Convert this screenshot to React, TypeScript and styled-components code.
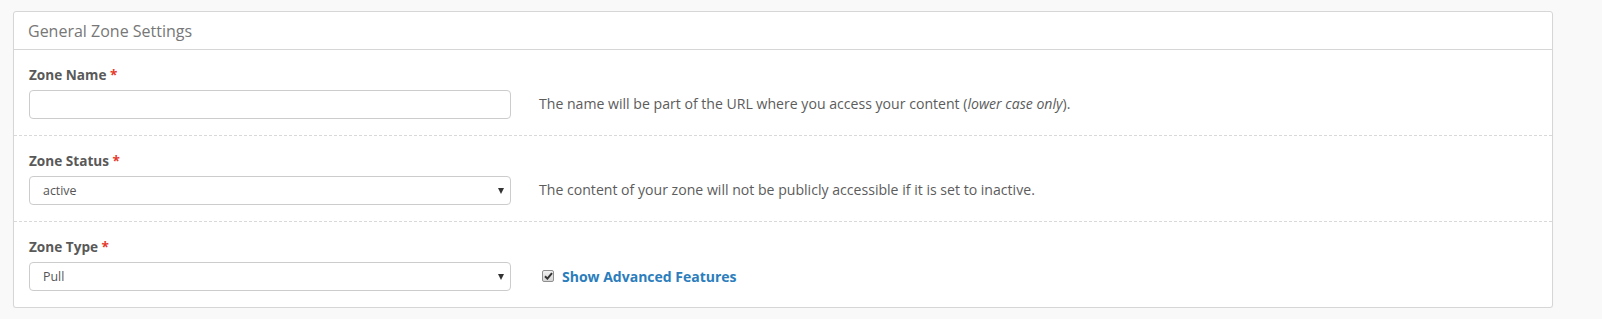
import React from 'react';
import styled, { createGlobalStyle } from 'styled-components';

const GlobalStyle = createGlobalStyle`
  html, body {
    margin: 0;
    padding: 0;
    background: #f9f9f9;
    font-family: 'Open Sans', 'Liberation Sans', Arial, sans-serif;
    color: #555;
  }
  * { box-sizing: border-box; }
`;

interface FieldRowProps {
  label: string;
  last?: boolean;
  control: React.ReactNode;
  aside: React.ReactNode;
}

const FieldRow: React.FC<FieldRowProps> = ({ label, last, control, aside }) => (
  <Row $last={last}>
    <LeftCol>
      <Label>
        {label} <Required>*</Required>
      </Label>
      {control}
    </LeftCol>
    <HelpCol>{aside}</HelpCol>
  </Row>
);

const App: React.FC = () => {
  return (
    <>
      <GlobalStyle />
      <Page>
        <Panel>
          <PanelHeader>General Zone Settings</PanelHeader>
          <FieldRow
            label="Zone Name"
            control={<TextInput type="text" defaultValue="" />}
            aside={
              <HelpText>
                The name will be part of the URL where you access your content (
                <em>lower case only</em>).
              </HelpText>
            }
          />
          <FieldRow
            label="Zone Status"
            control={
              <SelectWrap>
                <Select defaultValue="active">
                  <option value="active">active</option>
                  <option value="inactive">inactive</option>
                </Select>
              </SelectWrap>
            }
            aside={
              <HelpText>
                The content of your zone will not be publicly accessible if it is set to inactive.
              </HelpText>
            }
          />
          <FieldRow
            last
            label="Zone Type"
            control={
              <SelectWrap>
                <Select defaultValue="pull">
                  <option value="pull">Pull</option>
                  <option value="push">Push</option>
                </Select>
              </SelectWrap>
            }
            aside={
              <CheckLabel>
                <CheckBox>
                  <svg width="9" height="8" viewBox="0 0 9 8">
                    <path d="M1 4.2 L3.4 6.6 L8 1.2" fill="none" stroke="#333" strokeWidth="2" />
                  </svg>
                </CheckBox>
                Show Advanced Features
              </CheckLabel>
            }
          />
        </Panel>
      </Page>
    </>
  );
};

export default App;

const Page = styled.div`
  padding: 11px 0 0 13px;
`;

const Panel = styled.div`
  width: 1540px;
  background: #fff;
  border: 1px solid #d6d6d6;
  border-radius: 3px;
  box-shadow: 0 1px 1px rgba(0, 0, 0, 0.04);
`;

const PanelHeader = styled.div`
  height: 38px;
  padding: 0 14px;
  display: flex;
  align-items: center;
  font-size: 16px;
  color: #777;
  border-bottom: 1px solid #d6d6d6;
`;

const Row = styled.div<{ $last?: boolean }>`
  display: flex;
  align-items: flex-end;
  padding: 16px 15px 16px;
  border-bottom: ${(p) => (p.$last ? 'none' : '1px dashed #d9d9d9')};
`;

const LeftCol = styled.div`
  width: 482px;
  display: flex;
  flex-direction: column;
  gap: 6px;
`;

const Label = styled.div`
  font-size: 13.6px;
  line-height: 18px;
  font-weight: 700;
  color: #595959;
`;

const Required = styled.span`
  color: #e53b2c;
`;

const HelpCol = styled.div`
  height: 29px;
  display: flex;
  align-items: center;
  margin-left: 28px;
  padding-bottom: 3px;
`;

const HelpText = styled.div`
  font-size: 14.1px;
  color: #5c5c5c;
  em {
    font-style: italic;
  }
`;

const TextInput = styled.input`
  width: 100%;
  height: 29px;
  border: 1px solid #ccc;
  border-radius: 4px;
  background: #fff;
  padding: 0 12px;
  font-family: inherit;
  font-size: 12px;
  color: #555;
  outline: none;
`;

const SelectWrap = styled.div`
  position: relative;
  width: 100%;
  &::after {
    content: '';
    position: absolute;
    right: 7px;
    top: 12px;
    border-left: 3.5px solid transparent;
    border-right: 3.5px solid transparent;
    border-top: 6px solid #333;
    pointer-events: none;
  }
`;

const Select = styled.select`
  width: 100%;
  height: 29px;
  appearance: none;
  -webkit-appearance: none;
  border: 1px solid #ccc;
  border-radius: 4px;
  background: #fff;
  padding: 0 13px;
  font-family: inherit;
  font-size: 12.4px;
  color: #555;
  outline: none;
`;

const CheckLabel = styled.label`
  display: flex;
  align-items: center;
  gap: 8px;
  margin-left: 3px;
  margin-top: 2px;
  font-size: 14px;
  font-weight: 700;
  color: #2b7dbc;
`;

const CheckBox = styled.span`
  width: 12px;
  height: 12px;
  border: 1px solid #8f8f8f;
  border-radius: 2px;
  background: linear-gradient(#f0f0f0, #d6d6d6);
  display: flex;
  align-items: center;
  justify-content: center;
`;
